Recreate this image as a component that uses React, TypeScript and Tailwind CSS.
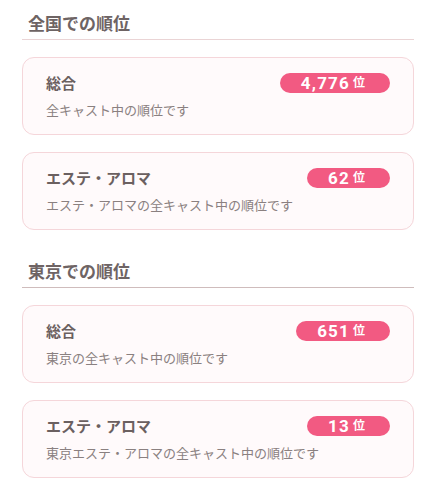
const sections = [
  {
    title: '全国での順位',
    line: 'border-[#ead4d5]',
    items: [
      { name: '総合', rank: '4,776', note: '全キャスト中の順位です' },
      { name: 'エステ・アロマ', rank: '62', note: 'エステ・アロマの全キャスト中の順位です' },
    ],
  },
  {
    title: '東京での順位',
    line: 'border-[#cfbcbc]',
    items: [
      { name: '総合', rank: '651', note: '東京の全キャスト中の順位です' },
      { name: 'エステ・アロマ', rank: '13', note: '東京エステ・アロマの全キャスト中の順位です' },
    ],
  },
];

function RankCard({ name, rank, note }: { name: string; rank: string; note: string }) {
  return (
    <div className="h-[78px] rounded-[12px] border border-[#f5d6da] bg-[#fffafb] px-[23px] pt-[15px]">
      <div className="flex h-[20px] items-center justify-between">
        <span className="text-[15px] font-bold leading-[20px] text-[#6b6060]">{name}</span>
        <span className="flex h-[20px] items-center rounded-full bg-[#f25a82] pl-[21px] pr-[25px] text-white">
          <span className="font-['Roboto',sans-serif] text-[17px] font-bold leading-[20px] tracking-[0.07em]">
            {rank}
          </span>
          <span className="ml-[3px] text-[12px] font-bold leading-[20px]">位</span>
        </span>
      </div>
      <p className="mt-[7px] text-[13px] leading-[20px] text-[#8a8080]">{note}</p>
    </div>
  );
}

export default function App() {
  return (
    <div
      className="min-h-[480px] bg-white px-[22px] pt-[12px] pr-[21px]"
      style={{ fontFamily: '"Noto Sans", "Noto Sans CJK JP", sans-serif' }}
    >
      {sections.map((section, i) => (
        <section key={section.title} className={i > 0 ? 'mt-[30px]' : ''}>
          <h2
            className={`h-[28px] border-b ${section.line} pl-[6px] text-[17px] font-bold leading-[24px] text-[#6e6464]`}
          >
            {section.title}
          </h2>
          <div className="mt-[17px] flex flex-col gap-[17px]">
            {section.items.map((item) => (
              <RankCard key={item.note} {...item} />
            ))}
          </div>
        </section>
      ))}
    </div>
  );
}
